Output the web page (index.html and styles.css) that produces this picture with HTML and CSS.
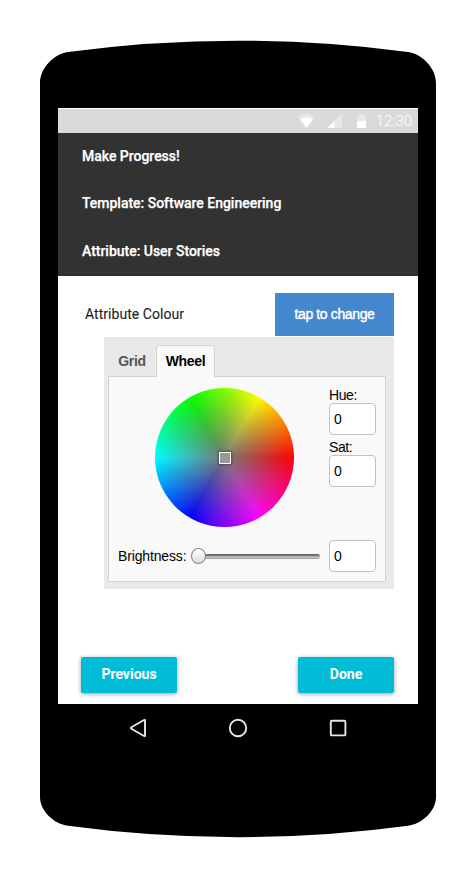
FILE: index.html
```html
<!DOCTYPE html>
<html lang="en">
<head>
<meta charset="utf-8">
<title>Make Progress!</title>
<link rel="stylesheet" href="styles.css">
</head>
<body>
<div class="device">
  <svg class="shell" viewBox="0 0 396 798" aria-hidden="true"><path d="M0 43C0 28 14 14 28 12Q112 .7 198 .7T368 12C382 14 396 28 396 43V757C396 771 382 784 368 785.8Q284 797.2 198 797.2T28 785.8C14 784 0 771 0 757Z"/></svg>
  <main class="screen">
    <div class="status">
      <svg class="wifi" viewBox="0 0 17 15"><path d="M0 3Q8.500-3 17 3L8.500 14Z" fill="#e8e8e8"/><path d="M2.300 5.500Q8.500 1.500 14.700 5.500L8.500 14Z" fill="#fff"/></svg>
      <svg class="signal" viewBox="0 0 15 14"><path d="M15 0V14H0Z" fill="#e8e8e8"/><path d="M7.500 7V14H0Z" fill="#fff"/></svg>
      <svg class="battery" viewBox="0 0 9 14"><path d="M0 2H2V0H7V2H9V14H0Z" fill="#e8e8e8"/><path d="M0 7H9V14H0Z" fill="#fff"/></svg>
      <time>12:30</time>
    </div>
    <header>
      <h1>Make Progress!</h1>
      <p>Template: Software Engineering</p>
      <p>Attribute: User Stories</p>
    </header>
    <section class="content">
      <div class="row">
        <label class="label">Attribute Colour</label>
        <button class="swatch"><span>tap to change</span></button>
      </div>
      <div class="picker">
        <div class="tabs">
          <span class="tab">Grid</span>
          <span class="tab active">Wheel</span>
        </div>
        <div class="panel">
          <div class="upper">
            <div class="wheel"><span class="marker"></span></div>
            <div class="fields">
              <span class="name">Hue:</span>
              <span class="value">0</span>
              <span class="name">Sat:</span>
              <span class="value">0</span>
            </div>
          </div>
          <div class="brightness">
            <span class="bname">Brightness:</span>
            <div class="slider"><span class="track"></span><span class="thumb"></span></div>
            <span class="value">0</span>
          </div>
        </div>
      </div>
      <div class="actions">
        <button class="action"><span>Previous</span></button>
        <button class="action"><span>Done</span></button>
      </div>
    </section>
  </main>
  <nav class="nav">
    <svg viewBox="-.8 0 20 20"><path d="M16.200 2.600V17.400Q16.200 18.500 15.200 18L2.600 10.700Q1.400 10 2.600 9.300L15.200 2Q16.200 1.500 16.200 2.600Z"/></svg>
    <svg viewBox="0 0 20 20"><circle cx="10" cy="10" r="8.200"/></svg>
    <svg viewBox="0 0 20 20"><rect x="2.800" y="2.800" width="14.600" height="14.600" rx="1"/></svg>
  </nav>
</div>
</body>
</html>
```
FILE: styles.css
```css
* { box-sizing: border-box; }
body { margin: 0; background: #fff; font-family: Roboto, sans-serif; font-size: 14px; color: #222; }
h1, p { margin: 0; }
button { border: 0; padding: 0; font: inherit; }
svg { display: block; }

.device { position: relative; width: 396px; height: 798px; margin: 40px; padding: 68px 18px 0; }
.shell { position: absolute; inset: 0; width: 396px; height: 798px; }
.screen { position: relative; height: 596px; background: #fff; padding-top: 1px; }

.status { height: 24px; background: #dadada; display: flex; align-items: center; padding: 0 6px 0 240px; }
.wifi { width: 17px; height: 15px; }
.signal { width: 15px; height: 14px; margin-left: 12px; }
.battery { width: 9px; height: 14px; margin-left: 15px; }
time { margin-left: auto; font-size: 15px; font-weight: 300; line-height: 24px; color: #fafafa; letter-spacing: -.02px; -webkit-text-stroke: .15px #fafafa; }

header { height: 143px; background: #323232; color: #fff; padding: 0 24px; border-bottom: 1px solid #2a2a2a; white-space: nowrap; }
header h1, header p { font-size: 14px; font-weight: 500; line-height: 46px; height: 47px; letter-spacing: -.02px; -webkit-text-stroke: .25px #fff; }
header p + p { line-height: 48px; }

.content { padding: 17px 24px 0 27px; }
.row { display: flex; justify-content: space-between; height: 44px; }
.label { line-height: 43px; letter-spacing: .04px; -webkit-text-stroke: .1px #222; }
.swatch { width: 119px; height: 43px; background: #4387cd; color: #fff; font: 14px/43px "Liberation Sans", sans-serif; -webkit-text-stroke: .4px #fff; letter-spacing: -.38px; }

.picker { width: 290px; height: 252px; margin-left: 19px; padding: 8px 8px 7px 4px; background: #e9e9e9; font-family: "Liberation Sans", sans-serif; font-size: 14px; color: #000; }
.tabs { display: flex; height: 32px; position: relative; font-weight: 700; letter-spacing: -.35px; }
.tab { width: 48px; text-align: center; line-height: 33px; color: #555; }
.tab.active { width: 59px; background: #f9f9f9; border: 1px solid #d3d3d3; border-bottom: 0; border-radius: 4px 4px 0 0; line-height: 31px; color: #000; }
.panel { width: 278px; height: 206px; margin-top: -1px; background: #f9f9f9; border: 1px solid #d3d3d3; padding: 10px 9px 0; }
.upper { display: flex; justify-content: space-between; height: 153px; padding-left: 37px; }
.wheel { width: 139px; height: 139px; margin-top: 1px; border-radius: 50%; display: grid; place-items: center; background: radial-gradient(closest-side, #777 0%, rgba(119,119,119,0) 100%), conic-gradient(from 90deg, red, magenta, blue, cyan, lime, yellow, red); }
.marker { width: 12px; height: 12px; margin: 1px 0 0 1px; background: #999; border: 1px solid #fff; box-shadow: 0 0 2px 1px rgba(0,0,0,.35); }
.fields { width: 47px; }
.name { display: block; height: 16px; line-height: 17px; letter-spacing: -.4px; }
.value { display: block; width: 47px; height: 32px; line-height: 31px; padding-left: 4px; background: #fff; border: 1px solid #c2c2c2; border-radius: 4px; }
.fields .value { margin-bottom: 4px; }
.brightness { display: flex; height: 32px; align-items: center; }
.bname { width: 73px; white-space: nowrap; letter-spacing: -.15px; }
.slider { position: relative; width: 129px; height: 16px; padding-top: 6px; }
.track { display: block; height: 5px; border-radius: 3px; background: linear-gradient(#666 0 25%, #aaa 45%, #c8c8c8 75%, #8c8c8c); }
.thumb { position: absolute; left: 0; top: 0; width: 15px; height: 16px; border: 1px solid #868686; border-radius: 50%; background: linear-gradient(#fff, #ddd); }
.brightness .value { margin-left: auto; }

.actions { display: flex; justify-content: space-between; margin: 68px 0 0 -4px; }
.action { width: 96px; height: 36px; background: #00bcd7; color: #fff; border-radius: 2px; box-shadow: 0 1px 4px rgba(0,0,0,.4); font-weight: 700; line-height: 34px; padding-bottom: 2px; }

.nav { position: relative; display: flex; justify-content: space-between; width: 220px; margin: 14px auto 0; }
.nav svg { width: 20px; height: 20px; fill: none; stroke: #e6e6e6; stroke-width: 1.900; }
```
